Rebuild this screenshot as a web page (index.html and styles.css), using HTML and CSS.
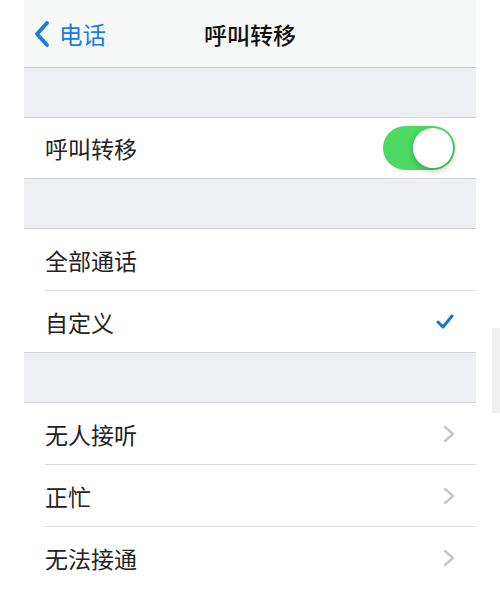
FILE: index.html
```html
<!DOCTYPE html>
<html lang="zh-CN">
<head>
    <meta charset="UTF-8">
    <meta name="viewport" content="width=device-width, initial-scale=1.0">
    <title>呼叫转移</title>
    <link rel="stylesheet" href="styles.css">
</head>
<body>
    <div class="screen">
        <div class="navbar">
            <a class="back" href="#">
                <svg class="back-icon" viewBox="0 0 18 28" width="18" height="28">
                    <path d="M14 3 L4 14 L14 25" fill="none" stroke="#1a7ae0" stroke-width="3.8" stroke-linecap="round" stroke-linejoin="round"/>
                </svg>
                <span>电话</span>
            </a>
            <div class="title">呼叫转移</div>
            <div></div>
        </div>

        <div class="spacer"></div>
        <div class="group">
            <div class="row short">
                <span>呼叫转移</span>
                <div class="switch on"><div class="knob"></div></div>
            </div>
        </div>

        <div class="spacer"></div>
        <div class="group">
            <div class="row"><span>全部通话</span></div>
            <div class="row">
                <span>自定义</span>
                <svg class="check" viewBox="0 0 18 15" width="18" height="15">
                    <path d="M2 8 L7 13 L16 2" fill="none" stroke="#1a72d8" stroke-width="3" stroke-linecap="round" stroke-linejoin="round"/>
                </svg>
            </div>
        </div>

        <div class="spacer"></div>
        <div class="group last">
            <div class="row">
                <span>无人接听</span>
                <svg class="chevron" viewBox="0 0 12 18" width="12" height="18"><path d="M2 2 L10 9 L2 16" fill="none" stroke="#c4c4c8" stroke-width="2.4" stroke-linecap="round" stroke-linejoin="round"/></svg>
            </div>
            <div class="row">
                <span>正忙</span>
                <svg class="chevron" viewBox="0 0 12 18" width="12" height="18"><path d="M2 2 L10 9 L2 16" fill="none" stroke="#c4c4c8" stroke-width="2.4" stroke-linecap="round" stroke-linejoin="round"/></svg>
            </div>
            <div class="row">
                <span>无法接通</span>
                <svg class="chevron" viewBox="0 0 12 18" width="12" height="18"><path d="M2 2 L10 9 L2 16" fill="none" stroke="#c4c4c8" stroke-width="2.4" stroke-linecap="round" stroke-linejoin="round"/></svg>
            </div>
        </div>
    </div>
    <div class="scrollbar"></div>
</body>
</html>
```

FILE: styles.css
```css
body {
    margin: 0;
    padding: 0;
    background: #ffffff;
    font-family: "Noto Sans CJK SC", "Noto Sans", sans-serif;
    color: #222222;
}
.screen {
    width: 452px;
    margin-left: 24px;
    background: #eeeff3;
}
.navbar {
    height: 67px;
    background: #f6f7f7;
    border-bottom: 1px solid #c8c8cc;
    display: grid;
    grid-template-columns: 1fr auto 1fr;
    align-items: center;
}
.back {
    display: flex;
    align-items: center;
    gap: 8px;
    padding-left: 9px;
    color: #1a7ae0;
    text-decoration: none;
    font-size: 23.5px;
}
.title {
    font-size: 23px;
    font-weight: 500;
    color: #111111;
}
.spacer {
    height: 49px;
}
.group {
    background: #ffffff;
    border-top: 1px solid #d2d2d6;
    border-bottom: 1px solid #d2d2d6;
}
.group.last {
    border-bottom: none;
    padding-bottom: 10px;
}
.row {
    height: 61px;
    margin-left: 21px;
    padding-right: 21px;
    display: flex;
    align-items: center;
    justify-content: space-between;
    font-size: 23px;
}
.row.short {
    height: 60px;
}
.row + .row {
    border-top: 1px solid #dcdcdf;
}
.switch {
    width: 72px;
    height: 44px;
    border-radius: 22px;
    background: #e5e5ea;
    display: flex;
    align-items: center;
}
.switch.on {
    background: #4cd964;
    justify-content: flex-end;
}
.knob {
    width: 40px;
    height: 40px;
    margin: 2px;
    border-radius: 50%;
    background: #ffffff;
    box-shadow: 0 3px 6px rgba(0, 0, 0, 0.25);
}
.check {
    margin-right: 1px;
}
.scrollbar {
    position: absolute;
    left: 492px;
    top: 328px;
    width: 8px;
    height: 85px;
    background: #efefef;
}
```
